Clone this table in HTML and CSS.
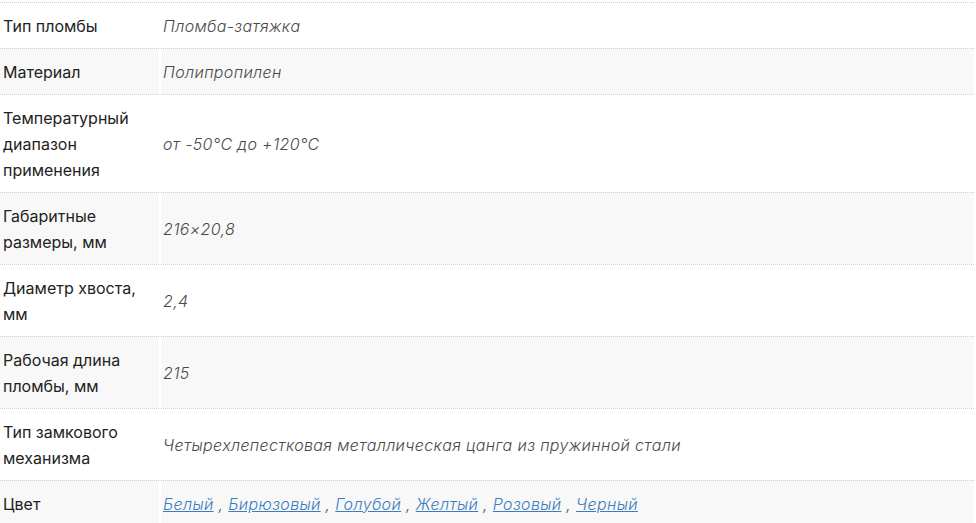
FILE: index.html
```html
<!DOCTYPE html>
<html lang="ru">
<head>
<meta charset="utf-8">
<link rel="stylesheet" href="styles.css">
</head>
<body>
<table class="props">
  <tr><td class="name">Тип пломбы</td><td class="val">Пломба-затяжка</td></tr>
  <tr class="alt"><td class="name">Материал</td><td class="val">Полипропилен</td></tr>
  <tr><td class="name">Температурный диапазон применения</td><td class="val">от -50°C до +120°C</td></tr>
  <tr class="alt"><td class="name">Габаритные размеры, мм</td><td class="val">216×20,8</td></tr>
  <tr><td class="name">Диаметр хвоста, мм</td><td class="val">2,4</td></tr>
  <tr class="alt"><td class="name">Рабочая длина пломбы, мм</td><td class="val">215</td></tr>
  <tr><td class="name">Тип замкового механизма</td><td class="val">Четырехлепестковая металлическая цанга из пружинной стали</td></tr>
  <tr class="alt"><td class="name">Цвет</td><td class="val"><a href="#">Белый</a> , <a href="#">Бирюзовый</a> , <a href="#">Голубой</a> , <a href="#">Желтый</a> , <a href="#">Розовый</a> , <a href="#">Черный</a></td></tr>
</table>
</body>
</html>
```
FILE: styles.css
```css
html, body {
  margin: 0;
  padding: 0;
  background: #fff;
}
body {
  font-family: Inter, "Noto Sans", sans-serif;
  padding-top: 2px;
}
.props {
  width: 978px;
  border-collapse: separate;
  border-spacing: 2px 0;
  margin-left: -2px;
}
.props td {
  border-top: 1px dotted #cfcfcf;
  padding: 10px 12px 9px 3px;
  line-height: 26px;
  vertical-align: middle;
}
.props .name {
  width: 144px;
  font-size: 16px;
  color: #222;
}
.props .val {
  padding-left: 2px;
  font-size: 16px;
  letter-spacing: 0.35px;
  font-style: italic;
  font-weight: 300;
  color: #4a4a4a;
}
.props .alt td {
  background: #f8f8f8;
}
.props a {
  color: #3a7cc0;
  text-decoration: underline;
}
```
